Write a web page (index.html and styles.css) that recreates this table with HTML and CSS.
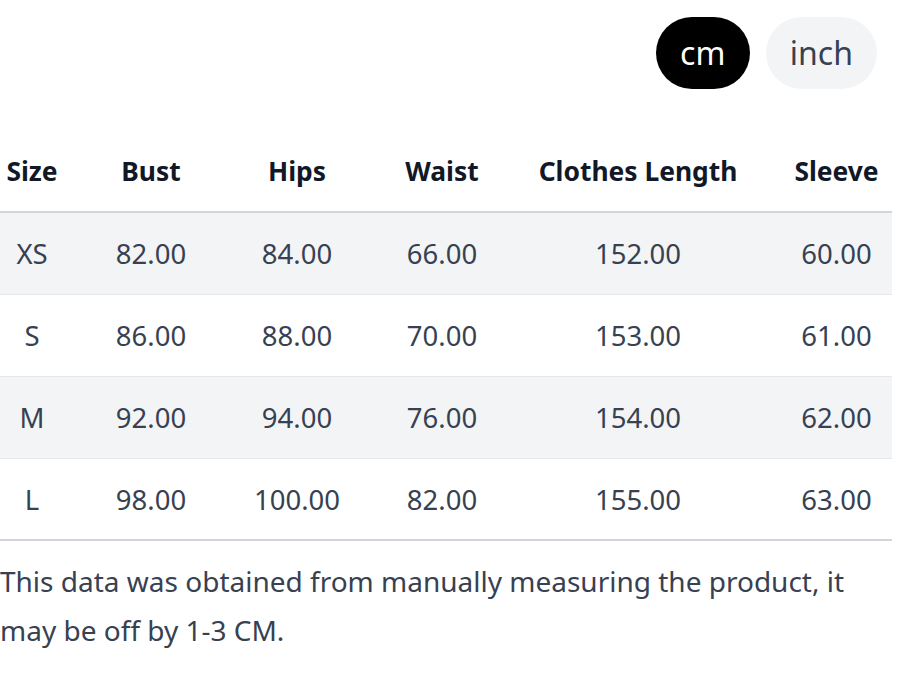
FILE: index.html
```html
<!DOCTYPE html>
<html lang="en">
<head>
<meta charset="utf-8">
<link rel="stylesheet" href="styles.css">
</head>
<body>
<div class="page">
  <div class="units">
    <button class="pill active">cm</button>
    <button class="pill">inch</button>
  </div>
  <table class="sizes">
    <colgroup>
      <col class="c-size"><col class="c-bust"><col class="c-hips"><col class="c-waist"><col class="c-length"><col class="c-sleeve">
    </colgroup>
    <thead>
      <tr><th>Size</th><th>Bust</th><th>Hips</th><th>Waist</th><th>Clothes Length</th><th>Sleeve</th></tr>
    </thead>
    <tbody>
      <tr><td>XS</td><td>82.00</td><td>84.00</td><td>66.00</td><td>152.00</td><td>60.00</td></tr>
      <tr><td>S</td><td>86.00</td><td>88.00</td><td>70.00</td><td>153.00</td><td>61.00</td></tr>
      <tr><td>M</td><td>92.00</td><td>94.00</td><td>76.00</td><td>154.00</td><td>62.00</td></tr>
      <tr><td>L</td><td>98.00</td><td>100.00</td><td>82.00</td><td>155.00</td><td>63.00</td></tr>
    </tbody>
  </table>
  <p class="note">This data was obtained from manually measuring the product, it may be off by 1-3 CM.</p>
</div>
</body>
</html>
```

FILE: styles.css
```css
html, body {
  margin: 0;
  padding: 0;
  background: #fff;
}
body {
  font-family: "Noto Sans", "Open Sans", sans-serif;
  color: #374151;
}
.page {
  width: 892px;
  overflow: hidden;
}
.units {
  display: flex;
  justify-content: flex-end;
  gap: 16px;
  padding: 17px 15px 0 0;
}
.pill {
  font-family: inherit;
  font-size: 32px;
  height: 72px;
  border: none;
  border-radius: 36px;
  padding: 0 24px;
  background: #f3f4f6;
  color: #374151;
  line-height: 72px;
}
.pill.active {
  background: #000;
  color: #fff;
  padding: 0 24.5px;
}
.sizes {
  margin-top: 41px;
  margin-left: -31px;
  width: 925px;
  table-layout: fixed;
  border-collapse: collapse;
  font-size: 27.5px;
}
.c-size { width: 126px; }
.c-bust { width: 112px; }
.c-hips { width: 180px; }
.c-waist { width: 110px; }
.c-length { width: 282px; }
.c-sleeve { width: 115px; }
.sizes th, .sizes td {
  text-align: center;
  padding: 0;
  height: 81px;
  white-space: nowrap;
}
.sizes th {
  color: #111827;
  font-weight: 700;
  font-size: 26.4px;
  border-bottom: 2px solid #d1d5db;
  height: 81px;
}
.sizes td {
  border-bottom: 1px solid #e5e7eb;
}
.sizes tbody tr:nth-child(odd) {
  background: #f3f4f6;
}
.sizes tbody tr:last-child td {
  border-bottom: 2px solid #d1d5db;
  height: 80px;
}
.note {
  margin: 16px 0 0;
  font-size: 28px;
  line-height: 49px;
  color: #374151;
}
```
